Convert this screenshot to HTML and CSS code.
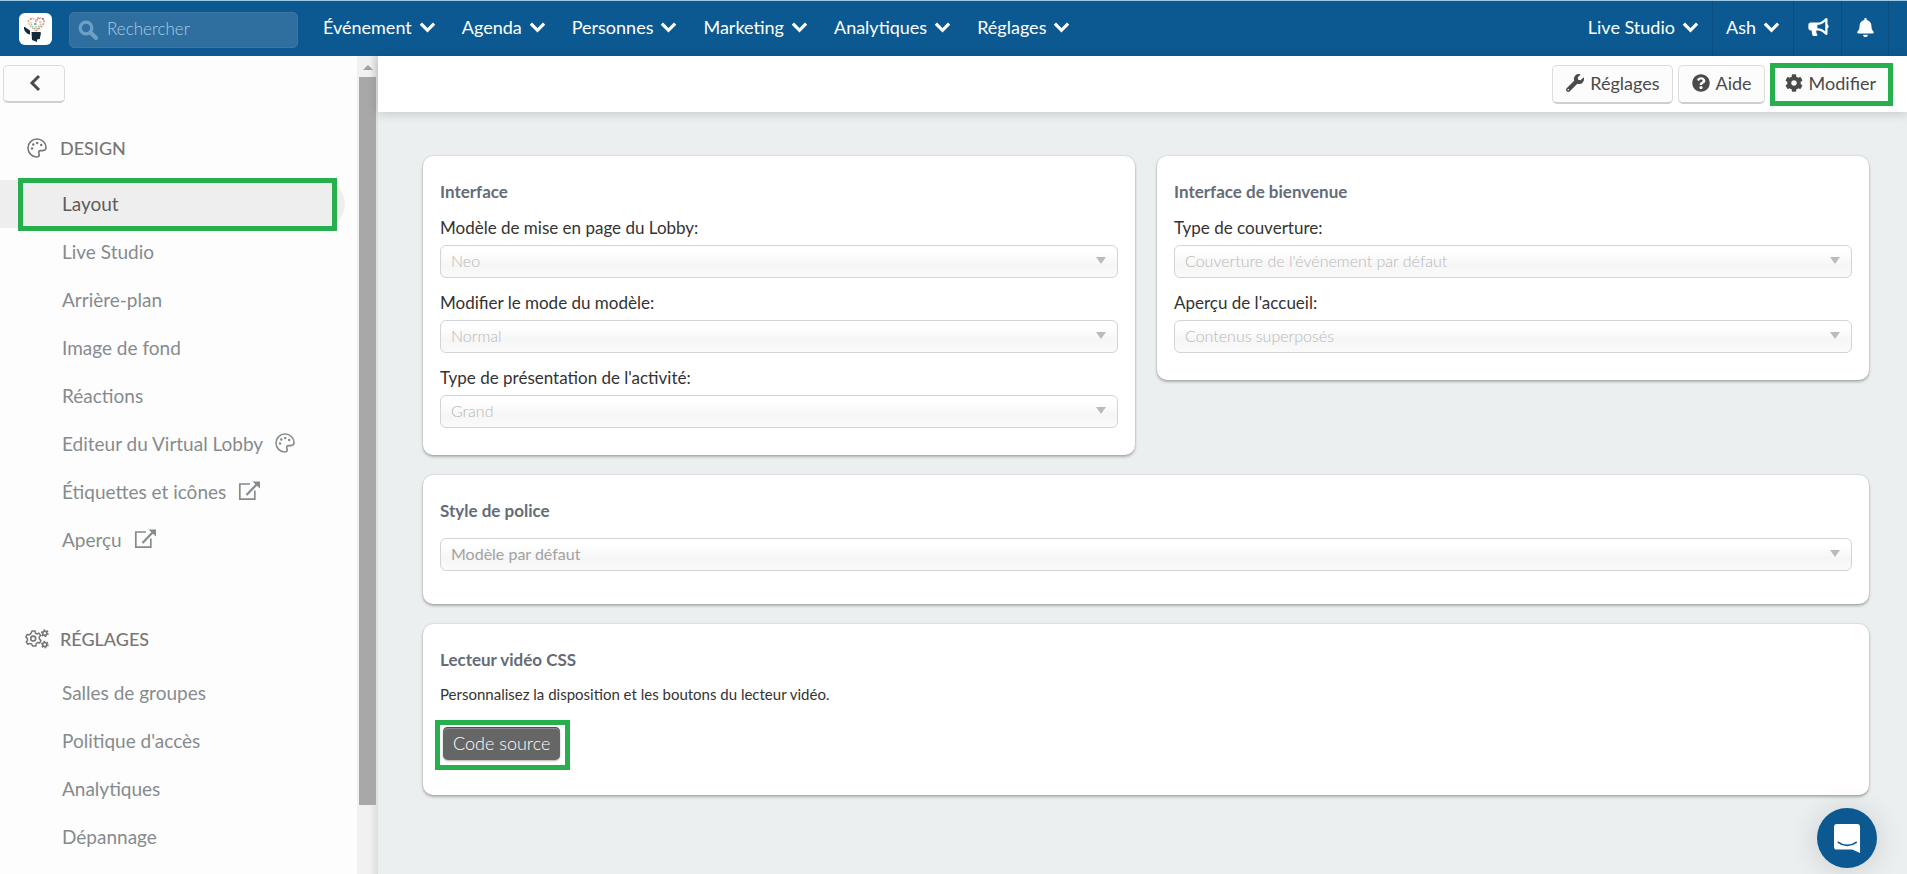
FILE: index.html
```html
<!DOCTYPE html>
<html lang="fr">
<head>
<meta charset="utf-8">
<meta name="viewport" content="width=device-width, initial-scale=1">
<title>Design – Layout</title>
<link rel="stylesheet" href="styles.css">
</head>
<body>
<svg class="sprite" aria-hidden="true">
  <symbol id="chevron" viewBox="0 0 18 12"><path d="M2 2.500l7 7 7-7" fill="none" stroke="currentColor" stroke-width="3.400"/></symbol>
  <symbol id="palette" viewBox="0 0 20 20">
    <path d="M10 1C5 1 1 5 1 10s4 9 8.800 9c1.600 0 2.400-.9 2.400-2 0-1.300-.5-1.800-.5-2.700 0-1 .8-1.700 1.800-1.700h2.300c2 0 3.200-1.100 3.200-3C19 4.700 15 1 10 1z" fill="none" stroke="currentColor" stroke-width="1.600"/>
    <circle cx="5" cy="10.500" r="1.250" fill="currentColor"/><circle cx="6.300" cy="6.400" r="1.250" fill="currentColor"/><circle cx="10.200" cy="4.900" r="1.250" fill="currentColor"/><circle cx="14.200" cy="6.900" r="1.250" fill="currentColor"/>
  </symbol>
  <symbol id="external" viewBox="0 0 22 20">
    <path d="M12 3H1.800v15.200H16.800V9.500" fill="none" stroke="currentColor" stroke-width="1.700"/>
    <path d="M8.500 14L19 3" fill="none" stroke="currentColor" stroke-width="2.200"/>
    <path d="M14.500 0.500H22V7.500z" fill="currentColor"/>
  </symbol>
</svg>

<header class="topbar">
  <a class="logo" href="#" aria-label="Accueil">
    <svg viewBox="0 0 33 32" aria-hidden="true">
      <g fill="none" stroke-width="1.600">
        <path d="M17 18c-3-3-9-6-7-11 2-3 6-2 7 1" stroke="#e8b9a0" stroke-dasharray="2 1"/>
        <path d="M17 18c3-3 9-6 8-11-2-3-6-2-8 1" stroke="#d98c7a" stroke-dasharray="2 1"/>
        <path d="M16 16c-2-2-4-4-4-7M18 16c1-2 4-4 4-7M17 8v8" stroke="#a9c4a4" stroke-dasharray="1.500 1"/>
      </g>
      <circle cx="12" cy="6" r=".8" fill="#d8583c"/><circle cx="16" cy="11" r="1" fill="#4aa58e"/><circle cx="24" cy="6" r=".8" fill="#3f6b62"/><circle cx="21" cy="9" r=".8" fill="#e39a3c"/><circle cx="9" cy="8" r=".8" fill="#e2b04c"/><circle cx="19" cy="5" r=".8" fill="#c75b4f"/>
      <path d="M5 14c2 0 3 2 6 3.500v4C8 21 4.500 18 5 14z" fill="#122b3c"/>
      <path d="M12.500 19h8.500l1 .8-1.200 6.200-2.800.4V29l-5-2z" fill="#122b3c"/>
    </svg>
  </a>
  <label class="search">
    <svg class="search-icon" viewBox="0 0 20 20" aria-hidden="true"><circle cx="8" cy="8" r="5.800" fill="none" stroke="currentColor" stroke-width="3.200"/><path d="M12.500 12.500l5.500 5.500" stroke="currentColor" stroke-width="4" stroke-linecap="round"/></svg>
    <input class="search-input" type="search" placeholder="Rechercher" aria-label="Rechercher">
  </label>
  <nav class="menu" aria-label="Navigation principale">
    <button class="menu-item" type="button">Événement <svg class="chevron" aria-hidden="true"><use href="#chevron"/></svg></button>
    <button class="menu-item" type="button">Agenda <svg class="chevron" aria-hidden="true"><use href="#chevron"/></svg></button>
    <button class="menu-item" type="button">Personnes <svg class="chevron" aria-hidden="true"><use href="#chevron"/></svg></button>
    <button class="menu-item" type="button">Marketing <svg class="chevron" aria-hidden="true"><use href="#chevron"/></svg></button>
    <button class="menu-item" type="button">Analytiques <svg class="chevron" aria-hidden="true"><use href="#chevron"/></svg></button>
    <button class="menu-item" type="button">Réglages <svg class="chevron" aria-hidden="true"><use href="#chevron"/></svg></button>
  </nav>
  <div class="account">
    <button class="account-item" type="button">Live Studio <svg class="chevron" aria-hidden="true"><use href="#chevron"/></svg></button>
    <button class="account-item" type="button">Ash <svg class="chevron" aria-hidden="true"><use href="#chevron"/></svg></button>
    <button class="account-item account-icon" type="button" aria-label="Annonces">
      <svg class="icon-horn" viewBox="0 0 576 512" aria-hidden="true"><path fill="currentColor" d="M576 240c0-23.600-13-44-32-55.100V32c0-8.700-7-32-32-32-7.100 0-14.200 2.400-20 7l-85 68c-42.700 34.100-96.300 53-151 53H64c-35.300 0-64 28.700-64 64v96c0 35.300 28.700 64 64 64h33.700c-1.400 10.500-2.100 21.200-2.100 32.100 0 39.800 9.300 77.400 25.600 110.900 5.200 10.700 16.500 17 28.400 17h74.300c26.100 0 41.700-29.800 25.900-50.600-16.400-21.500-26.200-48.300-26.200-77.400 0-11.100 1.600-21.800 4.400-32H256c54.700 0 108.300 18.900 151 53l85 68c5.700 4.500 12.700 7 20 7 24.900 0 32-22.800 32-32V295.100c19-11 32-31.500 32-55.100zm-96 141.400l-33-26.400C393 311.800 325.100 288 256 288v-96c69.100 0 137-23.800 191-67l33-26.400z"/></svg>
    </button>
    <button class="account-item account-icon" type="button" aria-label="Notifications">
      <svg class="icon-bell" viewBox="0 0 448 512" aria-hidden="true"><path fill="currentColor" d="M224 512c35.300 0 64-28.600 64-64H160c0 35.400 28.600 64 64 64zm215.400-149.700c-19.300-20.800-55.500-52-55.500-154.300 0-77.700-54.500-139.900-127.900-155.200V32c0-17.700-14.300-32-32-32s-32 14.300-32 32v20.800C118.600 68.100 64.100 130.300 64.100 208c0 102.300-36.200 133.500-55.500 154.300-6 6.400-8.700 14.200-8.600 21.700.1 16.400 13 32 32.100 32h383.800c19.100 0 32-15.600 32.100-32 .1-7.600-2.600-15.300-8.600-21.700z"/></svg>
    </button>
    <span class="account-end"></span>
  </div>
</header>

<div class="shell">
  <aside class="sidebar">
    <div class="sidebar-content">
      <button class="btn back" type="button" aria-label="Retour"><svg viewBox="0 0 12 18" aria-hidden="true"><path d="M10 2L3 9l7 7" fill="none" stroke="currentColor" stroke-width="3"/></svg></button>
      <h2 class="section-title"><svg class="section-icon" aria-hidden="true"><use href="#palette"/></svg>DESIGN</h2>
      <ul class="links">
        <li><a class="link active" href="#">Layout</a></li>
        <li><a class="link" href="#">Live Studio</a></li>
        <li><a class="link" href="#">Arrière-plan</a></li>
        <li><a class="link" href="#">Image de fond</a></li>
        <li><a class="link" href="#">Réactions</a></li>
        <li><a class="link" href="#">Editeur du Virtual Lobby <svg class="link-palette" aria-hidden="true"><use href="#palette"/></svg></a></li>
        <li><a class="link" href="#">Étiquettes et icônes <svg class="link-external" aria-hidden="true"><use href="#external"/></svg></a></li>
        <li><a class="link" href="#">Aperçu <svg class="link-external" aria-hidden="true"><use href="#external"/></svg></a></li>
      </ul>
      <h2 class="section-title section-settings">
        <svg class="section-icon" viewBox="0 0 24 20" aria-hidden="true">
          <g fill="none" stroke="currentColor">
            <path stroke-width="1.500" stroke-linejoin="round" d="M7 2h3l.5 2.200 1.500.8 2-.9 1.700 2.400-1.500 1.600.2 1.900 1.600 1.300-1.300 2.600-2.200-.3-1.400 1.200-.2 2.300H7.600l-1-2.100-1.700-.6-2 .9-1.700-2.400 1.400-1.600-.3-1.900L.8 8.200 2 5.600l2.300.2L5.800 4.600z"/>
            <circle cx="8.200" cy="9.600" r="2.500" stroke-width="1.600"/>
            <circle cx="19.800" cy="4.200" r="2.100" stroke-width="1.700"/>
            <circle cx="19.800" cy="4.200" r="3.300" stroke-width="1.300" stroke-dasharray="1.700 1.750"/>
            <circle cx="19.800" cy="15.600" r="2.100" stroke-width="1.700"/>
            <circle cx="19.800" cy="15.600" r="3.300" stroke-width="1.300" stroke-dasharray="1.700 1.750"/>
          </g>
        </svg>RÉGLAGES</h2>
      <ul class="links">
        <li><a class="link" href="#">Salles de groupes</a></li>
        <li><a class="link" href="#">Politique d'accès</a></li>
        <li><a class="link" href="#">Analytiques</a></li>
        <li><a class="link" href="#">Dépannage</a></li>
      </ul>
    </div>
    <div class="scrollbar" aria-hidden="true">
      <svg class="scroll-up" viewBox="0 0 10 5"><path d="M5 0l5 5H0z" fill="#a0a0a0"/></svg>
      <div class="scroll-thumb"></div>
      <div class="scroll-rest"></div>
    </div>
  </aside>

  <main class="main">
    <div class="toolbar">
      <button class="btn" type="button"><svg class="btn-icon" viewBox="0 0 512 512" aria-hidden="true"><path fill="currentColor" d="M507.700 109.100c-2.200-9-13.500-12.100-20.100-5.500l-74.400 74.400-67.900-11.300L334 98.900l74.400-74.400c6.600-6.600 3.400-17.900-5.700-20.200-47.400-11.700-99.600.9-136.600 37.900-39.600 39.600-50.500 97.100-34.100 147.200L18.700 402.800c-25 25-25 65.500 0 90.500s65.500 25 90.500 0l213.200-213.200c50.100 16.700 107.500 5.700 147.400-34.200 37.100-37.100 49.700-89.300 37.900-136.800zM64 472c-13.200 0-24-10.800-24-24 0-13.300 10.700-24 24-24s24 10.700 24 24c0 13.200-10.700 24-24 24z"/></svg>Réglages</button>
      <button class="btn" type="button"><svg class="btn-icon" viewBox="0 0 512 512" aria-hidden="true"><path fill="currentColor" d="M504 256c0 137-111 248-248 248S8 393 8 256C8 119.100 119 8 256 8s248 111.100 248 248zM262.700 90c-54.500 0-89.300 23-116.500 63.800-3.500 5.300-2.400 12.400 2.700 16.300l34.700 26.300c5.200 3.900 12.600 3 16.700-2.100 17.900-22.700 30.100-35.800 57.300-35.800 20.400 0 45.700 13.100 45.700 33 0 15-12.400 22.700-32.500 34C247.100 238.500 216 255 216 296v4c0 6.600 5.400 12 12 12h56c6.600 0 12-5.400 12-12v-1.300c0-28.700 83.800-29.900 83.800-107.500C379.800 132.700 319.200 90 262.700 90zM256 338c-25.400 0-46 20.600-46 46s20.600 46 46 46 46-20.600 46-46-20.600-46-46-46z"/></svg>Aide</button>
      <button class="btn btn-marked" type="button"><svg class="btn-icon" viewBox="0 0 512 512" aria-hidden="true"><path fill="currentColor" d="M487.400 315.700l-42.600-24.600c4.300-23.200 4.300-47 0-70.200l42.600-24.600c4.900-2.800 7.100-8.600 5.500-14-11.100-35.600-30-67.800-54.700-94.600-3.800-4.100-10-5.100-14.800-2.300L380.800 110c-17.900-15.400-38.500-27.300-60.800-35.100V25.800c0-5.600-3.900-10.500-9.400-11.700-36.700-8.200-74.300-7.800-109.200 0-5.500 1.200-9.400 6.100-9.400 11.700V75c-22.200 7.900-42.800 19.800-60.800 35.100L88.700 85.500c-4.900-2.800-11-1.900-14.800 2.300-24.700 26.700-43.600 58.900-54.700 94.600-1.700 5.400.6 11.200 5.500 14L67.300 221c-4.300 23.200-4.300 47 0 70.200l-42.600 24.600c-4.900 2.800-7.100 8.600-5.500 14 11.100 35.600 30 67.800 54.700 94.600 3.800 4.100 10 5.100 14.800 2.300l42.600-24.600c17.900 15.400 38.500 27.300 60.800 35.100v49.200c0 5.600 3.900 10.500 9.400 11.700 36.700 8.200 74.300 7.800 109.200 0 5.500-1.200 9.400-6.100 9.400-11.700v-49.200c22.200-7.900 42.800-19.800 60.800-35.100l42.600 24.600c4.900 2.800 11 1.900 14.800-2.300 24.700-26.700 43.600-58.900 54.700-94.600 1.500-5.500-.7-11.300-5.600-14.100zM256 336c-44.100 0-80-35.900-80-80s35.900-80 80-80 80 35.900 80 80-35.900 80-80 80z"/></svg>Modifier</button>
    </div>

    <div class="cards">
      <section class="card">
        <h3 class="card-title">Interface</h3>
        <label class="label" for="lobby">Modèle de mise en page du Lobby:</label>
        <div class="field"><select class="select" id="lobby" disabled><option>Neo</option></select></div>
        <label class="label" for="mode">Modifier le mode du modèle:</label>
        <div class="field"><select class="select" id="mode" disabled><option>Normal</option></select></div>
        <label class="label" for="activity">Type de présentation de l'activité:</label>
        <div class="field"><select class="select" id="activity" disabled><option>Grand</option></select></div>
      </section>
      <section class="card">
        <h3 class="card-title">Interface de bienvenue</h3>
        <label class="label" for="cover">Type de couverture:</label>
        <div class="field"><select class="select" id="cover" disabled><option>Couverture de l'événement par défaut</option></select></div>
        <label class="label" for="preview">Aperçu de l'accueil:</label>
        <div class="field"><select class="select" id="preview" disabled><option>Contenus superposés</option></select></div>
      </section>
      <section class="card card-wide card-font">
        <h3 class="card-title" id="font-title">Style de police</h3>
        <div class="field"><select class="select select-font" aria-labelledby="font-title" disabled><option>Modèle par défaut</option></select></div>
      </section>
      <section class="card card-wide card-video">
        <h3 class="card-title">Lecteur vidéo CSS</h3>
        <p class="text">Personnalisez la disposition et les boutons du lecteur vidéo.</p>
        <div class="marked"><button class="btn-dark" type="button">Code source</button></div>
      </section>
    </div>
  </main>
</div>

<button class="chat" type="button" aria-label="Ouvrir la messagerie">
  <svg viewBox="0 0 28 32" aria-hidden="true"><path d="M3 1h21a3 3 0 0 1 3 3v27l-8-3.500H3a3 3 0 0 1-3-3V4a3 3 0 0 1 3-3z" fill="#fff"/><path d="M4.500 20c5.500 4.200 13 4.200 18.500 0" fill="none" stroke="#0c5991" stroke-width="1.800" stroke-linecap="round"/></svg>
</button>
</body>
</html>
```

FILE: styles.css
```css
*,
*::before,
*::after {
  box-sizing: border-box;
}

:root {
  --blue: #0c5991;
  --green: #25b04d;
  --grey: #868b8e;
}

body {
  margin: 0;
  height: 100vh;
  display: flex;
  flex-direction: column;
  overflow: hidden;
  background: #ebeff0;
  color: #333;
  font-family: Lato, "Liberation Sans", sans-serif;
  font-size: 18px;
}

button,
input,
select {
  font: inherit;
  color: inherit;
}

button {
  cursor: pointer;
}

.sprite {
  position: absolute;
  width: 0;
  height: 0;
}

/* Top bar */

.topbar {
  flex: none;
  display: flex;
  align-items: center;
  height: 56px;
  padding-left: 19px;
  border-top: 1px solid #9ccbe8;
  background: var(--blue);
  color: #fff;
}

.logo {
  width: 33px;
  height: 32px;
  border-radius: 6px;
  background: #fff;
}

.logo svg {
  display: block;
}

.search {
  display: flex;
  align-items: center;
  gap: 9px;
  width: 229px;
  height: 36px;
  margin: 3px 12px 0 17px;
  padding-left: 8px;
  border: 1px solid #3a77a6;
  border-radius: 5px;
  background: #2f6f9f;
  color: #6ea0c4;
}

.search-icon {
  flex: none;
  width: 20px;
  height: 20px;
}

.search-input {
  min-width: 0;
  flex: 1;
  padding: 0 0 4px;
  border: 0;
  outline: 0;
  background: none;
  font-size: 17px;
  font-weight: 300;
}

.search-input::placeholder {
  color: #a9cbe2;
  opacity: 1;
}

.menu {
  display: flex;
}

.menu-item,
.account-item {
  display: flex;
  align-items: center;
  gap: 7px;
  height: 55px;
  padding: 0 13px 3px;
  border: 0;
  background: none;
  white-space: nowrap;
}

.chevron {
  width: 17px;
  height: 12px;
}

.account {
  display: flex;
  margin-left: auto;
}

.account-item,
.account-end {
  border-right: 1px solid #0a4d7f;
}

.account-end {
  width: 18px;
  border-right: 0;
}

.account-icon {
  padding: 0 12px 3px 14px;
}

.icon-horn {
  width: 21px;
  height: 18px;
}

.icon-bell {
  width: 17px;
  height: 19px;
  margin: 0 2px 0 1px;
}

/* Sidebar */

.shell {
  flex: 1;
  min-height: 0;
  display: flex;
}

.sidebar {
  flex: none;
  display: flex;
  width: 378px;
  background: #fdfdfd;
}

.sidebar-content {
  flex: 1;
  padding: 9px 0 0;
}

.scrollbar {
  display: flex;
  flex-direction: column;
  align-items: center;
  width: 21px;
  background: linear-gradient(to right, #f1f1f1 60%, #dcdddd);
}

.scroll-up {
  width: 10px;
  height: 5px;
  margin: 9px 0 7px;
}

.scroll-thumb {
  flex: 728;
  width: 17px;
  background: #a8a8a8;
}

.scroll-rest {
  flex: 69;
}

.btn {
  display: flex;
  align-items: center;
  justify-content: center;
  gap: 6px;
  height: 39px;
  padding: 0 12px 2px 13px;
  border: 1px solid #dcdcdc;
  border-bottom: 2px solid #cfcfcf;
  border-radius: 5px;
  background: #fcfcfc;
  color: #4a4a4a;
}

.back {
  width: 62px;
  height: 38px;
  margin-left: 3px;
}

.back svg {
  width: 12px;
  height: 18px;
}

.section-title {
  display: flex;
  align-items: center;
  gap: 12px;
  height: 26px;
  margin: 32px 0 0 26px;
  color: #777;
  font-size: 18px;
  font-weight: 500;
}

.section-icon {
  width: 22px;
  height: 20px;
}

.section-settings {
  gap: 11px;
  margin: 62px 0 0 25px;
}

.section-settings .section-icon {
  width: 24px;
}

.links {
  margin: 19px 0 0;
  padding: 0;
  list-style: none;
}

.section-settings + .links {
  margin-top: 17px;
}

.link {
  position: relative;
  display: flex;
  align-items: center;
  gap: 12px;
  height: 48px;
  margin-right: 12px;
  padding: 0 0 2px 62px;
  color: var(--grey);
  font-size: 19px;
  text-decoration: none;
}

.active {
  border-radius: 0 24px 24px 0;
  background: #eee;
  color: #5c5c5c;
}

.active::after {
  content: "";
  position: absolute;
  inset: -2px 8px -3px 18px;
  border: 5px solid var(--green);
}

.link-palette {
  width: 20px;
  height: 20px;
}

.link-external {
  width: 22px;
  height: 20px;
}

/* Main area */

.main {
  flex: 1;
  min-width: 0;
}

.toolbar {
  display: flex;
  justify-content: flex-end;
  align-items: center;
  gap: 5px;
  height: 56px;
  padding-right: 14px;
  background: #fff;
  box-shadow: 0 2px 10px rgba(0, 0, 0, 0.16);
}

.btn-icon {
  width: 18px;
  height: 18px;
}

.btn-marked {
  height: 43px;
  padding: 0 12px 2px 10px;
  border: 5px solid var(--green);
  border-radius: 0;
}

.cards {
  display: grid;
  grid-template-columns: 1fr 1fr;
  align-items: start;
  gap: 20px 22px;
  padding: 44px 38px 0 45px;
}

.card {
  padding: 24px 17px 27px;
  border-radius: 10px;
  background: #fff;
  box-shadow: 0 0 2px rgba(0, 0, 0, 0.2), 0 2px 3px rgba(0, 0, 0, 0.26);
}

.card-wide {
  grid-column: 1 / -1;
}

.card-title {
  margin: 0 0 12px;
  color: #646c78;
  font-size: 17px;
  line-height: 24px;
  font-weight: 700;
}

.label {
  display: block;
  margin-bottom: 5px;
  font-size: 17px;
  line-height: 24px;
}

.field {
  position: relative;
}

.field + .label {
  margin-top: 13px;
}

.field::after {
  content: "";
  position: absolute;
  top: 12px;
  right: 12px;
  border: 5px solid transparent;
  border-top: 7px solid #bbb;
  border-bottom: 0;
}

.select {
  display: block;
  width: 100%;
  height: 33px;
  padding: 0 30px 2px 10px;
  border: 1px solid #d2d4d5;
  border-radius: 6px;
  appearance: none;
  background: linear-gradient(#fff 20%, #f6f6f6 60%, #fafafa);
  color: #b8b8b8;
  font-size: 16px;
  font-weight: 300;
  opacity: 1;
}

.select-font {
  color: #a2a2a2;
  font-weight: 400;
}

.card-font {
  padding-bottom: 33px;
}

.card-font .card-title {
  margin-bottom: 15px;
}

.card-video {
  padding-bottom: 25px;
}

.text {
  margin: 0;
  font-size: 15px;
  line-height: 20px;
}

.marked {
  width: fit-content;
  margin: 16px 0 0 -5px;
  padding: 2px 5px 5px 3px;
  border: 5px solid var(--green);
}

.btn-dark {
  display: block;
  height: 33px;
  padding: 0 10px 2px;
  border: 0;
  border-radius: 5px;
  background: #666;
  box-shadow: inset 0 1px #505050, inset 0 2px #8a8a8a, 0 1px 2px rgba(0, 0, 0, 0.3);
  color: #fff;
  font-weight: 300;
}

/* Messenger launcher */

.chat {
  position: fixed;
  right: 30px;
  bottom: 6px;
  display: flex;
  align-items: center;
  justify-content: center;
  width: 60px;
  height: 60px;
  padding: 0;
  border: 0;
  border-radius: 50%;
  background: var(--blue);
  box-shadow: 0 2px 30px rgba(0, 0, 0, 0.14);
}

.chat svg {
  width: 27px;
  height: 31px;
}
```
